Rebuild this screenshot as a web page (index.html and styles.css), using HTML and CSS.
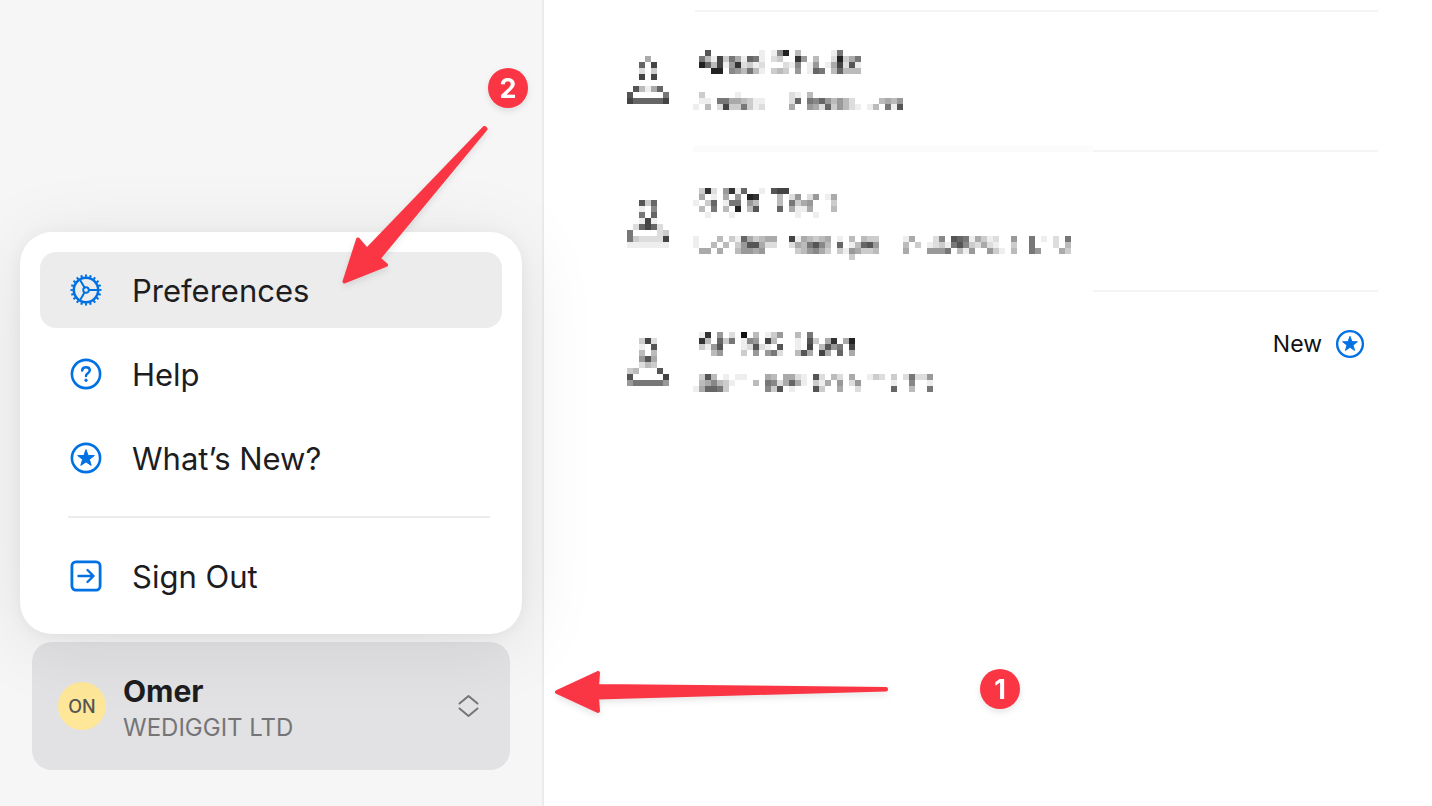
FILE: index.html
```html
<!DOCTYPE html>
<html lang="en">
<head>
<meta charset="utf-8">
<meta name="viewport" content="width=device-width, initial-scale=1">
<title>Users</title>
<link rel="stylesheet" href="styles.css">
</head>
<body>
<div class="app">
  <aside class="sidebar">
    <div class="account-area">
      <button class="account" type="button" aria-haspopup="menu" aria-expanded="true">
        <span class="account-avatar">ON</span>
        <span class="account-text">
          <span class="account-name">Omer</span>
          <span class="account-org">WEDIGGIT LTD</span>
        </span>
        <svg class="account-chevrons" viewBox="0 0 22 24" aria-hidden="true"><path d="M1.500 9.500 10.500 2l9 7.500M1.500 14.500 10.500 22l9-7.500"/></svg>
      </button>
      <div class="menu" role="menu">
        <button class="menu-item is-active" type="button" role="menuitem">
          <svg class="menu-icon" viewBox="0 0 32 32" aria-hidden="true">
            <circle cx="16" cy="16" r="12.200" stroke-width="2.500"/>
            <circle cx="16" cy="16" r="14" stroke-width="3" pathLength="40" stroke-dasharray=".9 1.100" stroke-dashoffset=".45"/>
            <circle cx="16" cy="16" r="2.800" stroke-width="1.900"/>
            <path stroke-width="2" d="M19 16h9M14.500 13.500 9.800 5.500M14.500 18.500 9.800 26.500"/>
          </svg>
          <span>Preferences</span>
        </button>
        <button class="menu-item" type="button" role="menuitem">
          <svg class="menu-icon" viewBox="0 0 32 32" aria-hidden="true">
            <circle cx="16" cy="16" r="14.100" stroke-width="2.600"/>
            <path stroke-width="2.500" stroke-linecap="round" stroke-linejoin="round" d="M12.200 12.500c.1-2.200 1.700-3.200 3.900-3.200s3.700 1.200 3.700 3c0 1.500-.9 2.200-2 3-1.200.8-1.800 1.400-1.800 2.800"/>
            <circle class="solid" cx="16" cy="22.200" r="1.200"/>
          </svg>
          <span>Help</span>
        </button>
        <button class="menu-item" type="button" role="menuitem">
          <svg class="menu-icon" viewBox="0 0 32 32" aria-hidden="true">
            <circle cx="16" cy="16" r="14.100" stroke-width="2.600"/>
            <path class="solid" stroke-linejoin="round" d="m16 7.600 2.100 5.900 6.200.1-4.900 3.800 1.800 6-5.200-3.500-5.200 3.500 1.800-6-4.900-3.800 6.200-.1z"/>
          </svg>
          <span>What’s New?</span>
        </button>
        <hr class="menu-divider">
        <button class="menu-item" type="button" role="menuitem">
          <svg class="menu-icon" viewBox="0 0 32 32" aria-hidden="true">
            <rect x="1.900" y="1.900" width="28.200" height="28.200" rx="4" stroke-width="2.800"/>
            <path stroke-width="2.400" stroke-linecap="round" stroke-linejoin="round" d="M8.500 16H23M17.500 10l6 6-6 6"/>
          </svg>
          <span>Sign Out</span>
        </button>
      </div>
    </div>
  </aside>

  <main class="content">
    <hr class="people-top">
    <ul class="people">
      <li class="person">
        <svg class="mosaic mosaic-avatar" data-mosaic="avatar1" width="42" height="138" role="img" aria-label="User"></svg>
        <div class="person-body has-veil">
          <svg class="mosaic" data-mosaic="text1" width="384" height="138" role="img" aria-label="Redacted user"></svg>
        </div>
      </li>
      <li class="person">
        <svg class="mosaic mosaic-avatar" data-mosaic="avatar2" width="42" height="138" role="img" aria-label="User"></svg>
        <div class="person-body">
          <svg class="mosaic" data-mosaic="text2" width="384" height="138" role="img" aria-label="Redacted user"></svg>
        </div>
      </li>
      <li class="person">
        <svg class="mosaic mosaic-avatar" data-mosaic="avatar3" width="42" height="138" role="img" aria-label="User"></svg>
        <div class="person-body is-last">
          <svg class="mosaic" data-mosaic="text3" width="384" height="138" role="img" aria-label="Redacted user"></svg>
          <span class="person-status">
            New
            <svg class="status-icon" viewBox="0 0 32 32" aria-hidden="true">
              <circle cx="16" cy="16" r="14.700" stroke-width="2.700"/>
              <path class="solid" stroke-linejoin="round" d="m16 7.200 2.200 6 6.300.2-5 3.900 1.800 6.100-5.300-3.600-5.300 3.600 1.800-6.100-5-3.900 6.300-.2z"/>
            </svg>
          </span>
        </div>
      </li>
    </ul>
  </main>

  <svg class="arrow arrow-menu" viewBox="0 0 150 164" aria-hidden="true">
    <path d="M4.500 160.500 18 118.500 27 129 144.500 7 145.500 8 38.500 137.500 46 144z"/>
  </svg>
  <svg class="arrow arrow-account" viewBox="0 0 338 46" aria-hidden="true">
    <path d="M5 23 46 4 45 17 334 20V20.500L45 28.500 46 42z"/>
  </svg>
  <span class="step step-menu">2</span>
  <span class="step step-account">1</span>
</div>
<script src="mosaic.js"></script>
</body>
</html>
```
FILE: styles.css
```css
* { box-sizing: border-box; }

body {
  margin: 0;
  background: #fff;
  color: #1d1d1f;
  font-family: Inter, "Liberation Sans", sans-serif;
}

button {
  border: 0;
  color: inherit;
  font: inherit;
  text-align: left;
  cursor: pointer;
}

.app {
  position: relative;
  display: grid;
  grid-template-columns: 38% 1fr;
  min-height: 100vh;
  overflow: hidden;
}

/* Sidebar */
.sidebar {
  z-index: 1;
  display: flex;
  flex-direction: column;
  justify-content: flex-end;
  padding: 0 32px 36px;
  border-right: 2px solid #ebebeb;
  background: #f6f6f6;
}

.account-area { position: relative; }

.account {
  display: flex;
  align-items: center;
  gap: 17px;
  width: 100%;
  padding: 24px 30px 24px 26px;
  border-radius: 20px;
  background: #e2e2e4;
}

.account-avatar {
  display: flex;
  align-items: center;
  justify-content: center;
  width: 48px;
  height: 48px;
  border-radius: 50%;
  background: #ffe799;
  color: #555;
  font-size: 18px;
  font-weight: 500;
}

.account-text {
  display: flex;
  flex: 1;
  flex-direction: column;
  padding-top: 6px;
}

.account-name {
  font-size: 30px;
  font-weight: 700;
  line-height: 38px;
}

.account-org {
  color: #757577;
  font-size: 24px;
  line-height: 36px;
}

.account-chevrons {
  width: 22px;
  height: 24px;
  fill: none;
  stroke: #757577;
  stroke-width: 2;
  stroke-linecap: round;
  stroke-linejoin: round;
}

/* Account menu */
.menu {
  position: absolute;
  right: -12px;
  bottom: calc(100% + 8px);
  left: -12px;
  display: flex;
  flex-direction: column;
  gap: 8px;
  padding: 20px;
  border-radius: 32px;
  background: #fff;
  box-shadow: 0 10px 80px rgba(0, 0, 0, .09), 0 2px 16px rgba(0, 0, 0, .05);
}

.menu-item {
  display: flex;
  align-items: center;
  gap: 30px;
  height: 76px;
  padding: 0 30px;
  border-radius: 16px;
  background: transparent;
  font-size: 31px;
}

.menu-item.is-active { background: #ececec; }

.menu-icon,
.status-icon {
  width: 32px;
  height: 32px;
  fill: none;
  stroke: #0071e3;
}

.solid {
  fill: #0071e3;
  stroke-width: 1;
}

.menu-divider {
  width: auto;
  height: 2px;
  margin: 12px 12px 12px 28px;
  border: 0;
  background: #ececec;
}

/* People list */
.content { padding: 10px 54px 0 83px; }

.people-top {
  height: 2px;
  margin: 0 0 0 68px;
  border: 0;
  background: #f4f4f4;
}

.people {
  margin: 0;
  padding: 0;
  list-style: none;
}

.person {
  display: flex;
  gap: 24px;
}

.person-body {
  display: flex;
  flex: 1;
  justify-content: space-between;
  padding: 0 14px 2px 0;
  background: linear-gradient(#f4f4f4, #f4f4f4) no-repeat right bottom / calc(100% - 400px) 2px;
}

.person-body.has-veil {
  background:
    linear-gradient(#f4f4f4, #f4f4f4) no-repeat right bottom / calc(100% - 400px) 2px,
    linear-gradient(#fbfbfb, #fbfbfb) no-repeat left bottom / 400px 6px;
}

.person-body.is-last { background: none; }

.mosaic {
  display: block;
  flex: none;
  shape-rendering: crispEdges;
}

.person-status {
  display: flex;
  align-items: center;
  gap: 14px;
  height: 104px;
  color: #111;
  font-size: 23px;
}

.status-icon {
  width: 28px;
  height: 28px;
  overflow: visible;
}

/* Walkthrough callouts */
.arrow,
.step {
  position: absolute;
  z-index: 2;
  filter: drop-shadow(0 3px 3px rgba(0, 0, 0, .1));
}

.arrow {
  overflow: visible;
  fill: #fa3544;
  stroke: #fa3544;
  stroke-width: 4;
  stroke-linejoin: round;
}

.arrow-menu {
  top: 121px;
  left: 340px;
  width: 150px;
  height: 164px;
}

.arrow-account {
  top: 669px;
  left: 552px;
  width: 338px;
  height: 46px;
}

.step {
  display: flex;
  align-items: center;
  justify-content: center;
  width: 40px;
  height: 40px;
  border-radius: 50%;
  background: #fa3544;
  color: #fff;
  font-size: 27px;
  font-weight: 700;
}

.step-menu {
  top: 68px;
  left: 488px;
}

.step-account {
  top: 669px;
  left: 980px;
}
```
FILE: mosaic.js
```js
// Privacy mosaics: each row is a line of 6px cells, one hex digit of darkness per cell.
const CELL = 6;
const mosaics = {
  avatar1: { top: 44, rows: [
    "...5...", "..9.b..", "..2.3..", "..b.b..", "", ".a4159.", "a.....8", "b99999b"
  ] },
  text1: { top: 38, rows: [
    "..a........1.17d.4.....18...",
    ".841b3851981.23..c6.4..2d358",
    ".d94b16c2312...217.16.15b2a1",
    "...dd.764841.343.6.198.49444",
    "", "", "",
    ".3.....1........21.4",
    ".11.88554311....29.87964642....4546",
    "1.4.2b338312....5..652936421.14.81a"
  ] },
  avatar2: { top: 48, rows: [
    "..a39..", "..1.7..", "..8.9..", "..1b1..", ".29b92.", "8....23", "832222b", "1111111"
  ] },
  text2: { top: 36, rows: [
    ".3c2.6c19..1.abb",
    ".5.1.5.6.dc...4.26.26.15",
    "1.39.188.64...4.8356...3",
    ".4.8.4.d.4a...9.5115...4",
    "..1...1..........1..1",
    "", "", "",
    "1...4.31953455..b154345.1.4.433....15...27.a9815312..6..8.1.2.8",
    "1..4.4.36aa522..2548a74.9.149a6....4.3.12318a732521..3..8...2.4",
    ".55.5..46656.....346753.3165334....5...6668.416..631.4..86...53",
    "..........................3"
  ] },
  avatar3: { top: 46, rows: [
    "..3b2..", "..1.a..", "..4.4..", "..6a5..", "..243..", "34...a.", "a.....b", "6888886"
  ] },
  text3: { top: 40, rows: [
    ".1c.6.2.e.4.136..4.8",
    ".c4.938.176.b4...1.a3.5c.5d",
    ".316a...12a21.a..1.b.4a68.b",
    "...46...3.6.682..4a5.b5.9.5",
    "", "", "",
    ".3a4.1.11...54.5521.a2.42.5..132.3.28226",
    ".457431...4.8725951.315.6.26.....1..7..1",
    "159983......73a.1...a3..5..2.....9..4..8"
  ] }
};

document.querySelectorAll("[data-mosaic]").forEach((svg) => {
  const { top, rows } = mosaics[svg.dataset.mosaic];
  rows.forEach((row, y) => {
    [...row].forEach((digit, x) => {
      if (digit === ".") return;
      const shade = 255 - parseInt(digit, 16) * 17;
      const cell = document.createElementNS("http://www.w3.org/2000/svg", "rect");
      cell.setAttribute("x", x * CELL);
      cell.setAttribute("y", top + y * CELL);
      cell.setAttribute("width", CELL);
      cell.setAttribute("height", CELL);
      cell.setAttribute("fill", `rgb(${shade},${shade},${shade})`);
      svg.append(cell);
    });
  });
});
```
